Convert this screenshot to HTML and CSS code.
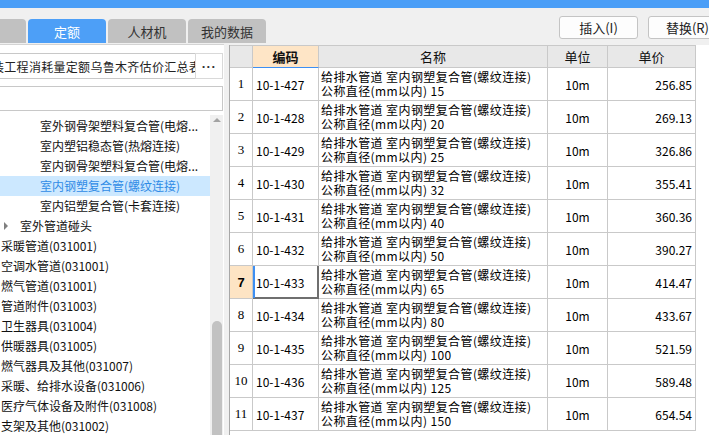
FILE: index.html
```html
<!DOCTYPE html>
<html lang="zh-CN">
<head>
<meta charset="utf-8">
<title>定额</title>
<link rel="stylesheet" href="styles.css">
</head>
<body>
<div class="topbar"></div>
<div class="toolbar">
  <div class="tabs">
    <div class="tab"></div>
    <div class="tab active">定额</div>
    <div class="tab">人材机</div>
    <div class="tab">我的数据</div>
  </div>
  <div class="actions">
    <button class="btn">插入(I)</button>
    <button class="btn">替换(R)</button>
  </div>
</div>
<div class="main">
  <div class="left">
    <div class="search-row">
      <div class="field">装工程消耗量定额乌鲁木齐估价汇总表</div>
      <div class="more">···</div>
    </div>
    <div class="field field2"></div>
    <div class="tree">
      <div class="tree-list">
        <div class="node l3">室外钢骨架塑料复合管(电熔...</div>
        <div class="node l3">室内塑铝稳态管(热熔连接)</div>
        <div class="node l3">室内钢骨架塑料复合管(电熔...</div>
        <div class="node l3 sel">室内钢塑复合管(螺纹连接)</div>
        <div class="node l3">室内铝塑复合管(卡套连接)</div>
        <div class="node l2"><span class="caret"></span>室外管道碰头</div>
        <div class="node l1">采暖管道(031001)</div>
        <div class="node l1">空调水管道(031001)</div>
        <div class="node l1">燃气管道(031001)</div>
        <div class="node l1">管道附件(031003)</div>
        <div class="node l1">卫生器具(031004)</div>
        <div class="node l1">供暖器具(031005)</div>
        <div class="node l1">燃气器具及其他(031007)</div>
        <div class="node l1">采暖、给排水设备(031006)</div>
        <div class="node l1">医疗气体设备及附件(031008)</div>
        <div class="node l1">支架及其他(031002)</div>
      </div>
      <div class="vscroll"><span class="arrow-up"></span><span class="thumb"></span></div>
    </div>
  </div>
  <div class="splitter"></div>
  <div class="right">
    <div class="grid">
      <div class="c h"></div>
      <div class="c h hcode">编码</div>
      <div class="c h">名称</div>
      <div class="c h">单位</div>
      <div class="c h">单价</div>

      <div class="c num">1</div><div class="c code">10-1-427</div><div class="c name">给排水管道 室内钢塑复合管(螺纹连接)<br>公称直径(mm以内) 15</div><div class="c unit">10m</div><div class="c price">256.85</div>
      <div class="c num">2</div><div class="c code">10-1-428</div><div class="c name">给排水管道 室内钢塑复合管(螺纹连接)<br>公称直径(mm以内) 20</div><div class="c unit">10m</div><div class="c price">269.13</div>
      <div class="c num">3</div><div class="c code">10-1-429</div><div class="c name">给排水管道 室内钢塑复合管(螺纹连接)<br>公称直径(mm以内) 25</div><div class="c unit">10m</div><div class="c price">326.86</div>
      <div class="c num">4</div><div class="c code">10-1-430</div><div class="c name">给排水管道 室内钢塑复合管(螺纹连接)<br>公称直径(mm以内) 32</div><div class="c unit">10m</div><div class="c price">355.41</div>
      <div class="c num">5</div><div class="c code">10-1-431</div><div class="c name">给排水管道 室内钢塑复合管(螺纹连接)<br>公称直径(mm以内) 40</div><div class="c unit">10m</div><div class="c price">360.36</div>
      <div class="c num">6</div><div class="c code">10-1-432</div><div class="c name">给排水管道 室内钢塑复合管(螺纹连接)<br>公称直径(mm以内) 50</div><div class="c unit">10m</div><div class="c price">390.27</div>
      <div class="c num cur">7</div><div class="c code cur">10-1-433</div><div class="c name">给排水管道 室内钢塑复合管(螺纹连接)<br>公称直径(mm以内) 65</div><div class="c unit">10m</div><div class="c price">414.47</div>
      <div class="c num">8</div><div class="c code">10-1-434</div><div class="c name">给排水管道 室内钢塑复合管(螺纹连接)<br>公称直径(mm以内) 80</div><div class="c unit">10m</div><div class="c price">433.67</div>
      <div class="c num">9</div><div class="c code">10-1-435</div><div class="c name">给排水管道 室内钢塑复合管(螺纹连接)<br>公称直径(mm以内) 100</div><div class="c unit">10m</div><div class="c price">521.59</div>
      <div class="c num">10</div><div class="c code">10-1-436</div><div class="c name">给排水管道 室内钢塑复合管(螺纹连接)<br>公称直径(mm以内) 125</div><div class="c unit">10m</div><div class="c price">589.48</div>
      <div class="c num">11</div><div class="c code">10-1-437</div><div class="c name">给排水管道 室内钢塑复合管(螺纹连接)<br>公称直径(mm以内) 150</div><div class="c unit">10m</div><div class="c price">654.54</div>
    </div>
  </div>
</div>
</body>
</html>
```
FILE: styles.css
```css
html, body {
  margin: 0;
  padding: 0;
}
body {
  width: 709px;
  height: 435px;
  overflow: hidden;
  background: #f0f0f0;
  font-family: "Noto Sans CJK SC", "Noto Sans", sans-serif;
  color: #111;
}
.topbar {
  height: 8px;
  background: #4a9ef7;
}
.toolbar {
  height: 36px;
  display: flex;
  justify-content: space-between;
}
.tabs {
  display: flex;
  gap: 2px;
  margin-left: -52px;
  align-self: flex-end;
  margin-bottom: 1px;
}
.tab {
  width: 78px;
  height: 24px;
  background: #c1c1c1;
  border-radius: 4px 4px 0 0;
  display: flex;
  align-items: center;
  justify-content: center;
  font-size: 13px;
  color: #333;
}
.tab.active {
  background: #4d9ff7;
  color: #fff;
}
.actions {
  display: flex;
  gap: 10px;
  margin-top: 8px;
  margin-right: -18px;
  align-self: flex-start;
}
.btn {
  width: 79px;
  height: 23px;
  border: 1px solid #c4c4c4;
  border-radius: 3px;
  background: #fdfdfd;
  font: 13px "Noto Sans CJK SC", sans-serif;
  color: #222;
  padding: 0;
}
.main {
  display: flex;
  height: 391px;
}
.left {
  width: 224px;
  flex: none;
  background: #fff;
  border-top: 1px solid #d4d4d4;
  box-sizing: border-box;
  padding-top: 8px;
  display: flex;
  flex-direction: column;
  overflow: hidden;
}
.search-row {
  display: flex;
  height: 26px;
  margin: 0 1px 0 -10px;
}
.field {
  flex: 1;
  min-width: 0;
  border: 1px solid #c8c8c8;
  font-size: 12px;
  letter-spacing: 0.3px;
  display: flex;
  align-items: center;
  white-space: nowrap;
  overflow: hidden;
  padding-left: 1px;
  color: #222;
}
.more {
  width: 28px;
  flex: none;
  box-sizing: border-box;
  border: 1px solid #d9d9d9;
  margin-left: -1px;
  display: flex;
  align-items: center;
  justify-content: center;
  font-family: "Liberation Sans", sans-serif;
  font-size: 13px;
  font-weight: bold;
  letter-spacing: 0.5px;
  color: #333;
}
.field2 {
  flex: none;
  height: 25px;
  box-sizing: border-box;
  margin: 7px 1px 0 -10px;
}
.tree {
  display: flex;
  margin-top: 4px;
  flex: 1;
  min-height: 0;
}
.tree-list {
  width: 210px;
  padding-top: 1px;
  overflow: hidden;
}
.node {
  height: 20px;
  line-height: 20px;
  font-size: 12px;
  white-space: nowrap;
  color: #111;
}
.l1 { padding-left: 1px; }
.l2 {
  padding-left: 4px;
  display: flex;
  align-items: center;
}
.l3 { padding-left: 40px; }
.node.sel {
  background: #cce8ff;
  color: #2f8be6;
}
.caret {
  width: 0;
  height: 0;
  border-left: 4px solid #808080;
  border-top: 4px solid transparent;
  border-bottom: 4px solid transparent;
  margin-right: 12px;
}
.vscroll {
  width: 13px;
  background: #f0f0f0;
  display: flex;
  flex-direction: column;
}
.arrow-up {
  margin: 3px auto 0;
  width: 0;
  height: 0;
  border-left: 4px solid transparent;
  border-right: 4px solid transparent;
  border-bottom: 4px solid #a3a3a3;
}
.thumb {
  margin-top: auto;
  margin-left: 2px;
  width: 10px;
  height: 114px;
  background: #c2c2c2;
  border-radius: 5px 5px 0 0;
}
.splitter {
  width: 5px;
  flex: none;
  background: #f0f0f0;
}
.right {
  flex: 1;
  background: #fff;
  margin-top: 1px;
  border-left: 1px solid #a8a8a8;
}
.grid {
  display: grid;
  grid-template-columns: 23px 66px 229px 60px 88px;
  grid-template-rows: 23px repeat(11, 33px);
  font-size: 12px;
  color: #000;
}
.c {
  border-right: 1px solid #c9c9c9;
  border-bottom: 1px solid #c9c9c9;
  display: flex;
  align-items: center;
  overflow: hidden;
  white-space: nowrap;
  box-sizing: border-box;
}
.h {
  background: #e8e8e8;
  border-top: 1px solid #c9c9c9;
  justify-content: center;
  font-size: 13px;
  color: #111;
}
.h.hcode {
  background: #fee5c6;
  font-weight: bold;
  border-bottom-color: #3d8ff2;
}
.num {
  justify-content: center;
  font-family: "Liberation Serif", serif;
  font-size: 13px;
}
.num.cur {
  background: #fde4c4;
  font-weight: bold;
  font-family: "Liberation Sans", sans-serif;
}
.code { padding-left: 3px; }
.code.cur {
  border-right-color: #6f6f6f;
  border-bottom-color: #6f6f6f;
  box-shadow: inset 2px 0 0 #3d8ff2, inset -1px -1px 0 #6f6f6f;
}
.name {
  padding-left: 2px;
  line-height: 14px;
  letter-spacing: 0.4px;
}
.unit { justify-content: center; }
.price {
  justify-content: flex-end;
  padding-right: 3px;
}
```
